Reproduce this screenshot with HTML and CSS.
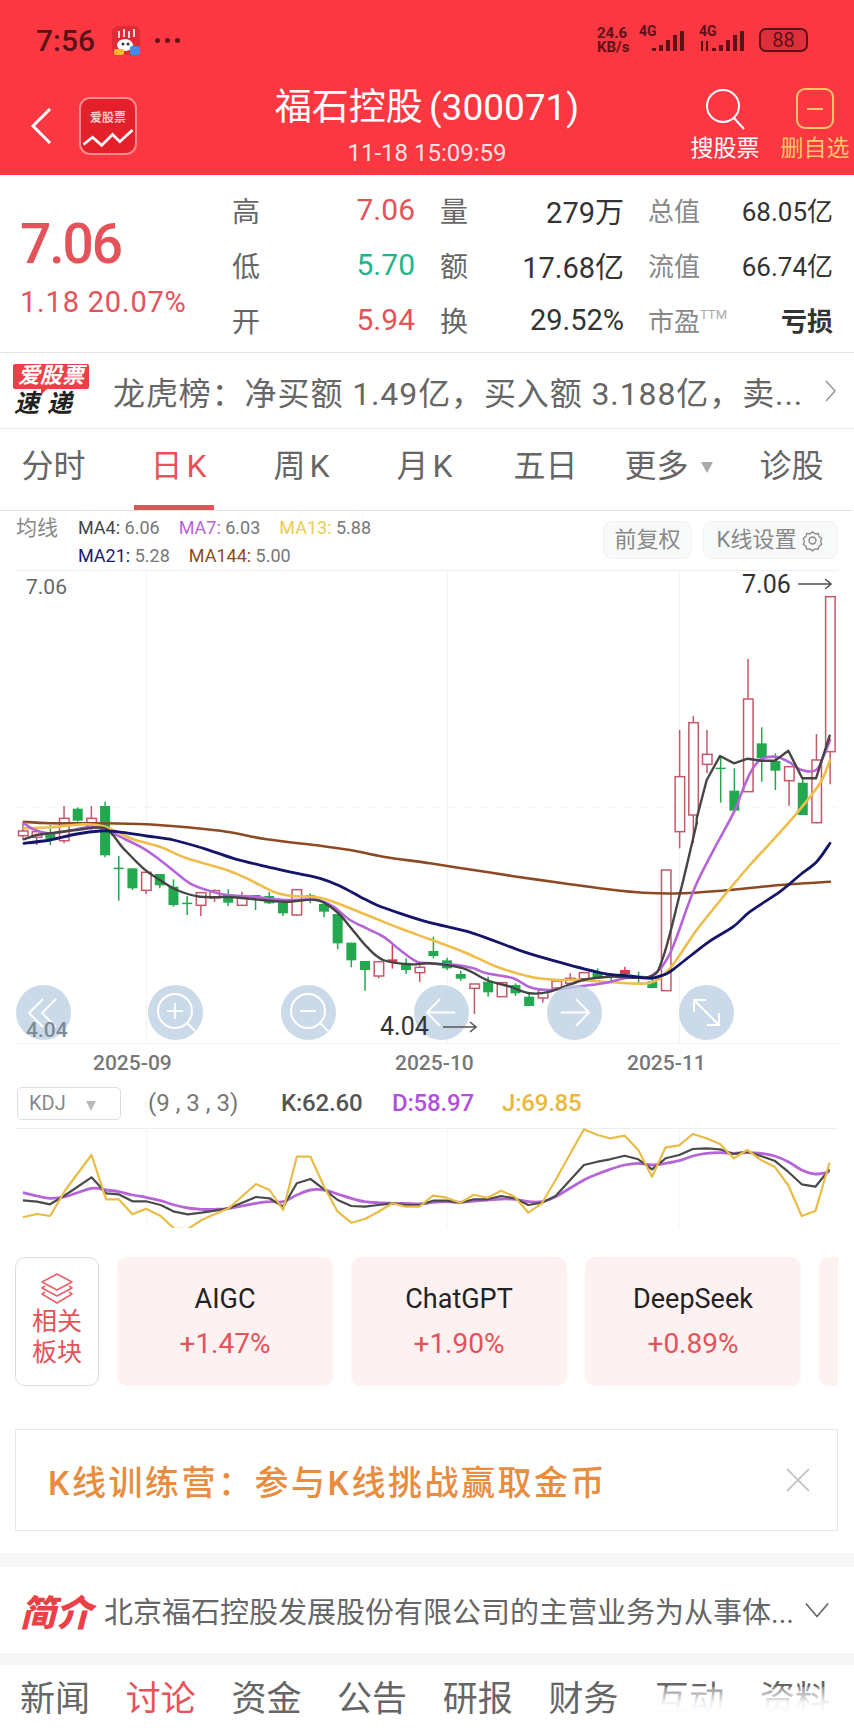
FILE: index.html
```html
<!DOCTYPE html>
<html lang="zh-CN">
<head>
<meta charset="utf-8">
<title>福石控股(300071)</title>
<link rel="stylesheet" href="styles.css">
</head>
<body>
<div class="phone">
  <header class="hero">
    <div class="status">
      <span class="clock">7:56</span>
      <svg class="notif" viewBox="0 0 28 29"><rect width="28" height="29" rx="6" fill="#e02a35"/><path d="M7 5v7M12 3v8M17 5v7M22 3v8" stroke="#ffd9d9" stroke-width="2"/><ellipse cx="13" cy="19" rx="8" ry="6" fill="#fff"/><rect x="2" y="23" width="10" height="6" rx="2" fill="#f5b82e"/><rect x="18" y="20" width="10" height="9" rx="2" fill="#3b8fe8"/><circle cx="11" cy="18" r="1.500" fill="#333"/><circle cx="16" cy="18" r="1.500" fill="#333"/></svg>
      <span class="dots"><i></i><i></i><i></i></span>
      <span class="status-right">
        <span class="speed"><span class="speed-line">24.6</span><span class="speed-line">KB/s</span></span>
        <span class="sig">
          <span class="g4">4G</span>
          <svg class="signal" viewBox="0 0 46 28"><rect x="13" y="22" width="4" height="3"/><rect x="20" y="19" width="4" height="6"/><rect x="27" y="14" width="4" height="11"/><rect x="34" y="9" width="4" height="16"/><rect x="41" y="5" width="4" height="20"/></svg>
        </span>
        <span class="sig two">
          <span class="g4">4G</span>
          <svg class="signal" viewBox="0 0 46 28"><path d="M3 15v10M8 15v10" stroke="#5e1218" stroke-width="2"/><rect x="13" y="22" width="4" height="3"/><rect x="20" y="19" width="4" height="6"/><rect x="27" y="14" width="4" height="11"/><rect x="34" y="9" width="4" height="16"/><rect x="41" y="5" width="4" height="20"/></svg>
        </span>
        <span class="battery">88</span>
      </span>
    </div>
    <nav class="nav">
      <div class="nav-left">
        <svg class="back" viewBox="0 0 22 38"><path d="M20 2 3 19l17 17" fill="none" stroke="#fff" stroke-width="3"/></svg>
        <span class="app-icon">
          <span class="app-name">爱股票</span>
          <svg class="app-line" viewBox="0 0 56 22"><path d="M1 17 11 9l10 9L33 6l8 8L55 1" fill="none" stroke="#fff" stroke-width="3"/></svg>
        </span>
      </div>
      <div class="title-block">
        <div class="title">福石控股 (300071)</div>
        <div class="subtitle">11-18 15:09:59</div>
      </div>
      <div class="nav-actions">
        <div class="action">
          <svg class="action-icon" viewBox="0 0 42 42"><circle cx="19" cy="18" r="16" fill="none" stroke="#fff" stroke-width="2"/><path d="m30 30 10 11" stroke="#fff" stroke-width="2"/></svg>
          <span>搜股票</span>
        </div>
        <div class="action gold">
          <span class="minus-box"><i></i></span>
          <span>删自选</span>
        </div>
      </div>
    </nav>
  </header>

  <section class="quote">
    <div class="price-cell">
      <div class="price">7.06</div>
      <div class="change">1.18 20.07%</div>
    </div>
    <span class="q-label">高</span><span class="q-val up">7.06</span><span class="q-label q2">量</span><span class="q-num">279万</span><span class="q-sub">总值</span><span class="q-small">68.05亿</span>
    <span class="q-label">低</span><span class="q-val down">5.70</span><span class="q-label q2">额</span><span class="q-num">17.68亿</span><span class="q-sub">流值</span><span class="q-small">66.74亿</span>
    <span class="q-label">开</span><span class="q-val up">5.94</span><span class="q-label q2">换</span><span class="q-num">29.52%</span><span class="q-sub">市盈<sup class="ttm">TTM</sup></span><span class="q-small strong">亏损</span>
  </section>

  <section class="news">
    <div class="news-logo">
      <span class="news-tag">爱股票</span>
      <span class="news-sub">速递</span>
    </div>
    <div class="news-text">龙虎榜：净买额 1.49亿，买入额 3.188亿，卖...</div>
    <svg class="news-arrow" viewBox="0 0 12 22"><path d="m1 1 9 10-9 10" fill="none" stroke="#999" stroke-width="1.600"/></svg>
  </section>

  <div class="tabs">
    <span class="tab">分时</span>
    <span class="tab active wide">日K</span>
    <span class="tab wide">周K</span>
    <span class="tab wide">月K</span>
    <span class="tab">五日</span>
    <span class="tab">更多<i class="tab-caret"></i></span>
    <span class="tab">诊股</span>
  </div>

  <div class="ma-head">
    <span class="ma-title">均线</span>
    <div class="ma-legend">
      <div class="ma-row">
        <span class="ma-item"><b class="c-ma4">MA4:</b> 6.06</span>
        <span class="ma-item"><b class="c-ma7">MA7:</b> 6.03</span>
        <span class="ma-item"><b class="c-ma13">MA13:</b> 5.88</span>
      </div>
      <div class="ma-row">
        <span class="ma-item"><b class="c-ma21">MA21:</b> 5.28</span>
        <span class="ma-item"><b class="c-ma144">MA144:</b> 5.00</span>
      </div>
    </div>
    <div class="ma-buttons">
      <span class="chip c-a">前复权</span>
      <span class="chip c-b">K线设置
        <svg class="gear" viewBox="0 0 24 24"><path d="M12 2l3 2.200 3.700-.3 1 3.600 3 2.200-1.300 3.300 1.300 3.300-3 2.200-1 3.600-3.700-.3-3 2.200-3-2.200-3.700.3-1-3.600-3-2.200 1.300-3.300L1.300 9.700l3-2.200 1-3.600 3.700.3z" transform="translate(1.200 1.200) scale(.9)" fill="none" stroke="#888" stroke-width="1.500"/><circle cx="12" cy="12" r="3.600" fill="none" stroke="#888" stroke-width="1.500"/></svg>
      </span>
    </div>
  </div>

  <div class="chart">
    <svg id="kline" class="chart-svg" viewBox="0 570 854 474"></svg>
    <span class="axis-top">7.06</span>
    <svg class="circle-btn b1" viewBox="0 0 55 55"><circle cx="27.500" cy="27.500" r="27.500"/><path d="M27 14 13 28l14 14M40 14 26 28l14 14"/></svg>
    <svg class="circle-btn b2" viewBox="0 0 55 55"><circle cx="27.500" cy="27.500" r="27.500"/><circle class="ln" cx="27" cy="26" r="17"/><path d="M27 18v16M19 26h16M39 38l8 8"/></svg>
    <svg class="circle-btn b3" viewBox="0 0 55 55"><circle cx="27.500" cy="27.500" r="27.500"/><circle class="ln" cx="27" cy="26" r="17"/><path d="M19 26h16M39 38l8 8"/></svg>
    <svg class="circle-btn b4" viewBox="0 0 55 55"><circle cx="27.500" cy="27.500" r="27.500"/><path d="M14 27.500h27M26 14 13 27.500 26 41"/></svg>
    <svg class="circle-btn b5" viewBox="0 0 55 55"><circle cx="27.500" cy="27.500" r="27.500"/><path d="M14 27.500h27M29 14l13 13.500L29 41"/></svg>
    <svg class="circle-btn b6" viewBox="0 0 55 55"><circle cx="27.500" cy="27.500" r="27.500"/><path d="M15 15l25 25M15 27V15h12M40 28v12H28"/></svg>
    <span class="axis-bottom">4.04</span>
    <span class="mark mark-high">7.06</span>
    <svg class="mark-arrow arrow-high" viewBox="0 0 34 12"><path d="M0 6h33M27 1l6 5-6 5" fill="none" stroke="#555" stroke-width="1.500"/></svg>
    <span class="mark mark-low">4.04</span>
    <svg class="mark-arrow arrow-low" viewBox="0 0 34 12"><path d="M0 6h33M27 1l6 5-6 5" fill="none" stroke="#555" stroke-width="1.500"/></svg>
  </div>

  <div class="dates">
    <span class="date d1">2025-09</span>
    <span class="date d2">2025-10</span>
    <span class="date d3">2025-11</span>
  </div>

  <div class="kdj-head">
    <span class="kdj-select">KDJ<i class="tab-caret small"></i></span>
    <span class="kdj-param">(9 , 3 , 3)</span>
    <span class="kdj-v k">K:62.60</span>
    <span class="kdj-v d">D:58.97</span>
    <span class="kdj-v j">J:69.85</span>
  </div>
  <svg id="kdj" class="kdj-svg" viewBox="0 1128 854 100"></svg>

  <section class="related">
    <div class="rel-head">
      <svg class="rel-icon" viewBox="0 0 34 32"><g fill="none" stroke="#e8646a" stroke-width="1.600" stroke-linejoin="round"><path d="M17 1 32 9 17 17 2 9z"/><path d="M5 13 2 15l15 8 15-8-3-2"/><path d="M5 19 2 21l15 9 15-9-3-2"/></g></svg>
      <span>相关</span><span>板块</span>
    </div>
    <div class="rel-card"><span class="rel-name">AIGC</span><span class="rel-pct">+1.47%</span></div>
    <div class="rel-card"><span class="rel-name">ChatGPT</span><span class="rel-pct">+1.90%</span></div>
    <div class="rel-card"><span class="rel-name">DeepSeek</span><span class="rel-pct">+0.89%</span></div>
    <div class="rel-card"></div>
  </section>

  <section class="banner">
    <span class="banner-text">K线训练营：参与K线挑战赢取金币</span>
    <svg class="banner-x" viewBox="0 0 24 24"><path d="m1 1 22 22M23 1 1 23" stroke="#c8c8c8" stroke-width="1.800"/></svg>
  </section>

  <div class="strip first"></div>
  <section class="intro">
    <span class="intro-tag">简介</span>
    <span class="intro-text">北京福石控股发展股份有限公司的主营业务为从事体...</span>
    <svg class="intro-arrow" viewBox="0 0 26 16"><path d="m1 1 12 14L25 1" fill="none" stroke="#666" stroke-width="1.800"/></svg>
  </section>
  <div class="strip"></div>

  <div class="bottom-tabs">
    <span>新闻</span><span class="on">讨论</span><span>资金</span><span>公告</span><span>研报</span><span>财务</span><span>互动</span><span>资料</span>
  </div>
  <div class="veil"></div>
</div>
<script src="chart.js"></script>
</body>
</html>
```
FILE: styles.css
```css
* { box-sizing: border-box; }
html, body { margin: 0; padding: 0; background: #fff; }
body { font-family: Roboto, "Noto Sans CJK SC", sans-serif; color: #333; }
i { font-style: normal; }

.phone { position: relative; width: 854px; height: 1731px; overflow: hidden; background: #fff; }

/* header */
.hero { height: 175px; background: #fb3842; color: #fff; }
.status { height: 80px; padding-left: 36px; display: flex; align-items: center; color: #5e1218; }
.clock { font-size: 30px; font-weight: 500; width: 76px; }
.notif { width: 28px; height: 29px; }
.dots { display: flex; gap: 5px; margin-left: 15px; }
.dots i { width: 5px; height: 5px; border-radius: 50%; background: #6a1218; }
.status-right { margin-left: auto; display: flex; align-items: center; padding-right: 46px; }
.speed { width: 42px; display: flex; flex-direction: column; font-size: 15px; font-weight: 700; line-height: 14px; }
.speed-line { display: block; height: 14px; }
.sig { position: relative; width: 46px; height: 28px; display: block; }
.sig.two { margin-left: 14px; }
.signal { display: block; width: 46px; height: 28px; fill: #5e1218; }
.g4 { position: absolute; left: 0; top: -3px; font-size: 14px; font-weight: 700; line-height: 16px; color: #5e1218; }
.battery { width: 49px; height: 24px; margin-left: 14px; border: 2px solid #5e1218; border-radius: 7px; font-size: 20px; line-height: 20px; text-align: center; color: #5e1218; background: rgba(94, 18, 24, .18); }

.nav { height: 95px; display: grid; grid-template-columns: 1fr auto 1fr; align-items: start; }
.nav-left { display: flex; align-items: center; padding: 17px 0 0 30px; gap: 27px; }
.back { width: 22px; height: 38px; }
.app-icon { width: 58px; height: 58px; border-radius: 11px; background: #e4202a; border: 2px solid #fb8a8e; display: flex; flex-direction: column; align-items: center; padding-top: 12px; }
.app-name { font-size: 12px; font-weight: 700; color: #ffc9c9; line-height: 14px; }
.app-line { width: 54px; height: 20px; margin-top: 4px; }
.title-block { text-align: center; padding-top: 5px; }
.title { font-size: 37px; line-height: 46px; word-spacing: -3px; }
.subtitle { font-size: 24px; line-height: 30px; margin-top: 7px; color: #fde2e3; }
.nav-actions { display: flex; justify-content: flex-end; padding: 8px 4px 0 0; gap: 20px; }
.action { width: 70px; display: flex; flex-direction: column; align-items: center; font-size: 23px; line-height: 28px; white-space: nowrap; }
.action-icon { width: 42px; height: 42px; margin-bottom: 5px; }
.gold { color: #ffc76b; }
.minus-box { width: 38px; height: 41px; margin-bottom: 6px; border: 2px solid #ffc76b; border-radius: 9px; display: flex; align-items: center; justify-content: center; }
.minus-box i { width: 16px; height: 2px; background: #ffc76b; }

/* quote */
.quote { height: 178px; padding-top: 7px; border-bottom: 1px solid #e4e4e4; display: grid; grid-template-columns: 232px 28px 155px 53px 156px 106px 103px; grid-auto-rows: 55px; align-items: center; }
.price-cell { grid-row: 1 / 4; padding-left: 20px; align-self: start; }
.price { font-size: 55px; font-weight: 500; line-height: 60px; margin-top: 32px; color: #e4525a; letter-spacing: -2px; }
.change { font-size: 29px; line-height: 34px; margin-top: 11px; color: #e4525a; letter-spacing: .8px; white-space: nowrap; }
.q-label { font-size: 28px; color: #666; }
.q2 { padding-left: 25px; }
.q-val { font-size: 30px; text-align: right; }
.up { color: #e4525a; }
.down { color: #1fb58c; }
.q-num { font-size: 29px; text-align: right; color: #333; }
.q-sub { font-size: 26px; color: #888; padding-left: 24px; position: relative; }
.ttm { font-size: 13px; color: #aaa; vertical-align: 12px; line-height: 0; }
.q-small { font-size: 26px; text-align: right; color: #333; }
.q-small.strong { font-weight: 700; }

/* news */
.news { height: 76px; display: flex; align-items: center; padding-left: 13px; border-bottom: 1px solid #e8e8e8; }
.news-logo { width: 76px; display: flex; flex-direction: column; align-items: flex-start; }
.news-tag { position: relative; display: block; width: 76px; height: 25px; background: #ec4048; color: #fff; border-radius: 2px; font-size: 22px; line-height: 24px; font-weight: 700; font-style: italic; text-align: center; }
.news-tag::after { content: ""; position: absolute; left: 28px; top: 25px; border-style: solid; border-width: 6px 6px 0 0; border-color: #ec4048 transparent transparent transparent; }
.news-sub { font-size: 25px; line-height: 28px; font-weight: 700; font-style: italic; color: #222; margin: 1px 0 0 1px; letter-spacing: 8px; }
.news-text { margin-left: 24px; font-size: 32px; letter-spacing: .9px; color: #666; white-space: nowrap; width: 695px; overflow: hidden; }
.news-arrow { width: 12px; height: 22px; margin-left: 17px; }

/* tabs */
.tabs { height: 82px; width: 861px; margin-left: -8px; display: grid; grid-template-columns: repeat(7, 123px); align-items: start; border-bottom: 1px solid #e2e2e2; }
.tab { position: relative; height: 81px; line-height: 74px; font-size: 32px; color: #666; text-align: center; white-space: nowrap; }
.tab.wide { letter-spacing: 4px; padding-left: 8px; }
.tab.active { color: #e4525a; }
.tab.active::after { content: ""; position: absolute; left: 19px; right: 24px; bottom: 0; height: 5px; background: #e4525a; }
.tab-caret { display: inline-block; margin-left: 12px; vertical-align: 4px; border-style: solid; border-width: 11px 6.500px 0; border-color: #aaa transparent transparent; }
.tab-caret.small { border-width: 10px 5.500px 0; margin-left: 20px; vertical-align: -1px; border-color: #bbb transparent transparent; }

/* MA */
.ma-head { height: 59px; display: flex; padding: 4px 16px 0; position: relative; }
.ma-title { font-size: 21px; line-height: 26px; color: #888; width: 62px; }
.ma-legend { display: flex; flex-direction: column; gap: 3px; font-size: 18px; color: #777; }
.ma-row { display: flex; gap: 19px; line-height: 25px; }
.ma-item b { font-weight: 400; }
.c-ma4 { color: #444; }
.c-ma7 { color: #b565d8; }
.c-ma13 { color: #eccb55; }
.c-ma21 { color: #1a1a6e; }
.c-ma144 { color: #8a4a1c; }
.ma-buttons { margin-left: auto; display: flex; gap: 11px; padding-top: 6px; }
.chip { height: 38px; border-radius: 9px; background: #f8f9f9; border: 1px solid #f1f2f2; font-size: 22px; line-height: 36px; color: #888; display: flex; align-items: center; justify-content: center; gap: 5px; white-space: nowrap; }
.c-a { width: 89px; }
.c-b { width: 135px; }
.gear { width: 23px; height: 23px; }

/* chart */
.chart { position: relative; height: 474px; }
.chart-svg { display: block; width: 854px; height: 474px; }
.axis-top, .axis-bottom { position: absolute; left: 26px; font-size: 21px; line-height: 24px; color: #666; }
.axis-top { top: 5px; }
.axis-bottom { top: 448px; color: #7d8b97; font-weight: 500; }
.mark { position: absolute; font-size: 25px; line-height: 30px; color: #333; }
.mark-high { left: 742px; top: 0; }
.mark-low { left: 380px; top: 442px; }
.mark-arrow { position: absolute; width: 34px; height: 12px; }
.arrow-high { left: 798px; top: 8px; }
.arrow-low { left: 443px; top: 451px; }
.circle-btn { position: absolute; width: 55px; height: 55px; top: 414.500px; }
.circle-btn circle { fill: #bdd0e3; fill-opacity: .78; stroke: none; }
.circle-btn path { fill: none; stroke: #fff; stroke-width: 2; }
.circle-btn circle.ln { fill: none; stroke: #fff; stroke-width: 2; }
.b1 { left: 15.500px; }
.b2 { left: 147.500px; }
.b3 { left: 280.500px; }
.b4 { left: 413.500px; }
.b5 { left: 546.500px; }
.b6 { left: 678.500px; }

.dates { position: relative; height: 43px; }
.date { position: absolute; top: 6px; font-size: 21px; line-height: 26px; color: #777; font-weight: 500; }
.d1 { left: 93px; }
.d2 { left: 395px; }
.d3 { left: 627px; }

.kdj-head { height: 41px; display: flex; align-items: flex-start; padding-left: 17px; font-size: 24px; line-height: 33px; }
.kdj-select { width: 104px; height: 33px; border: 1px solid #ddd; border-radius: 5px; padding-left: 11px; font-size: 20px; line-height: 31px; color: #888; }
.kdj-param { color: #777; margin-left: 27px; width: 133px; white-space: nowrap; }
.kdj-v { font-weight: 500; letter-spacing: -.2px; }
.kdj-v.k { color: #555; width: 111px; }
.kdj-v.d { color: #b050e0; width: 110px; }
.kdj-v.j { color: #e8b93a; }
.kdj-svg { display: block; width: 854px; height: 100px; margin-bottom: 29px; }

/* related */
.related { height: 129px; width: 838px; overflow: hidden; display: flex; gap: 18px; padding-left: 15px; }
.rel-head { flex: none; width: 84px; height: 129px; border: 1px solid #ddd; border-radius: 10px; display: flex; flex-direction: column; align-items: center; color: #e4525a; font-size: 25px; line-height: 31px; padding-top: 15px; }
.rel-icon { width: 34px; height: 32px; margin-bottom: 1px; }
.rel-card { flex: none; width: 216px; height: 129px; border-radius: 10px; background: #fdf1f1; display: flex; flex-direction: column; align-items: center; padding-top: 24px; }
.rel-name { font-size: 27px; line-height: 36px; color: #222; }
.rel-pct { font-size: 28px; line-height: 36px; margin-top: 9px; color: #e4525a; }

/* banner */
.banner { height: 102px; margin: 43px 16px 0 15px; border: 1px solid #e6e6e6; display: flex; align-items: center; justify-content: space-between; padding: 0 27px 0 32px; }
.banner-text { font-size: 34px; letter-spacing: 2.500px; color: #e98c3e; font-weight: 500; white-space: nowrap; }
.banner-x { width: 24px; height: 24px; }

.strip { height: 12px; background: #f6f6f6; }
.strip.first { height: 14px; margin-top: 22px; }
.intro { height: 86px; display: flex; align-items: center; padding-left: 20px; }
.intro-tag { width: 84px; font-size: 36px; font-weight: 900; font-style: italic; color: #ec4048; white-space: nowrap; }
.intro-text { font-size: 29px; color: #666; white-space: nowrap; width: 701px; }
.intro-arrow { width: 24px; height: 16px; }

.bottom-tabs { height: 66px; display: flex; justify-content: space-between; padding: 12px 24px 0 20px; font-size: 35px; line-height: 46px; color: #666; }
.bottom-tabs .on { color: #e4525a; }
.veil { position: absolute; left: 638px; top: 1687px; width: 216px; height: 44px; background: linear-gradient(180deg, rgba(255,255,255,.3), rgba(255,255,255,.9) 35%, #fff 60%); }
```
FILE: chart.js
```js
(function () {
  var NS = 'http://www.w3.org/2000/svg';
  function el(parent, name, attrs) {
    var n = document.createElementNS(NS, name);
    for (var k in attrs) n.setAttribute(k, attrs[k]);
    parent.appendChild(n);
    return n;
  }
  function yz(z) { return 780 + z / 3; }
  function z4(a) { var o = []; for (var i = 0; i < a.length; i += 2) o.push([a[i] / 3, 780 + a[i + 1] / 3]); return o; }
  function z5(a) { var o = []; for (var i = 0; i < a.length; i += 2) o.push([430 + a[i] / 3, 780 + a[i + 1] / 3]); return o; }
  function z6(a) { var o = []; for (var i = 0; i < a.length; i += 2) o.push([430 + a[i] / 3, 560 + a[i + 1] / 3]); return o; }

  function smooth(p) {
    var d = 'M' + p[0][0].toFixed(1) + ' ' + p[0][1].toFixed(1);
    for (var i = 0; i < p.length - 1; i++) {
      var a = p[i - 1] || p[i], b = p[i], c = p[i + 1], e = p[i + 2] || c;
      d += 'C' + (b[0] + (c[0] - a[0]) / 6).toFixed(1) + ' ' + (b[1] + (c[1] - a[1]) / 6).toFixed(1) + ' ' +
        (c[0] - (e[0] - b[0]) / 6).toFixed(1) + ' ' + (c[1] - (e[1] - b[1]) / 6).toFixed(1) + ' ' +
        c[0].toFixed(1) + ' ' + c[1].toFixed(1);
    }
    return d;
  }
  function poly(p) {
    return 'M' + p.map(function (q) { return q[0].toFixed(1) + ' ' + q[1].toFixed(1); }).join('L');
  }

  var RED = '#c4586a', GREEN = '#22a94f', SOLID = '#d23f4c';
  // zoomed y of the upper crop, expressed in the lower crop's units
  function z6y(z) { return z - 660; }
  var raw = [
    ['r',125,153,167,180],['r',145,155,172,195],['g',135,162,178,195],['r',78,115,182,190],['g',82,86,122,125],
    ['r',78,115,145,150],['g',65,78,226,232],['g',228,263,266,362],['g',265,265,325,330],['r',275,277,331,342],
    ['g',282,282,316,325],['g',298,320,375,380],['g',348,368,371,405],['r',338,338,376,408],['r',328,332,354,366],
    ['g',328,342,368,378],['r',335,353,376,378],['g',345,345,349,390],['g',336,348,370,372],['g',360,368,400,408],
    ['r',329,329,405,407],['g',340,346,354,370],['g',368,372,395,412],['g',400,402,490,508],['g',488,488,541,562],
    ['g',543,543,570,632],['r',545,545,588,595],['s',495,538,546,566],['g',535,552,570,582],['r',555,562,578,606],
    ['g',470,513,528,535],['g',533,541,565,570],['g',572,582,596,602],['r',612,612,625,702],['g',590,605,637,650],
    ['r',608,608,650,650],['g',610,615,640,648],['g',640,650,678,678],['r',630,630,654,668],['r',603,603,624,624],
    ['r',580,595,610,622],['r',575,578,596,605],['g',565,578,596,596],['g',580,585,590,605],['s',560,570,582,585],
    ['g',575,587,590,610],['g',590,604,624,624],['r',270,270,632,632],
    ['r',z6y(510),z6y(650),155,205],['r',z6y(468),z6y(488),105,190],['r',z6y(510),z6y(583),z6y(613),z6y(640)],
    ['g',z6y(590),z6y(623),z6y(626),z6y(728)],['g',z6y(625),z6y(692),z6y(752),z6y(755)],['r',z6y(297),z6y(417),z6y(695),z6y(695)],
    ['g',z6y(502),z6y(550),z6y(595),z6y(665)],['g',z6y(580),z6y(603),z6y(632),z6y(690)],['r',z6y(620),z6y(620),z6y(662),z6y(737)],
    ['g',z6y(655),z6y(668),z6y(765),z6y(765)],['r',z6y(522),z6y(600),128,130],['r',z6y(110),z6y(110),z6y(575),z6y(673)]
  ];

  var svg = document.getElementById('kline');
  el(svg, 'path', { d: 'M16 570.5H838', stroke: '#eee', 'stroke-width': 1 });
  el(svg, 'path', { d: 'M146.500 570V1044M447.500 570V1044M679.500 570V1044', stroke: '#f3f3f3', 'stroke-width': 1 });
  el(svg, 'path', { d: 'M16 807H838', stroke: '#f0f0f0', 'stroke-width': 1, 'stroke-dasharray': '8 8' });
  el(svg, 'path', { d: 'M16 1044H840', stroke: '#e4e4e4', 'stroke-width': 1 });

  raw.forEach(function (c, i) {
    var x = 23 + 13.68 * i, h = yz(c[1]), t = yz(c[2]), b = yz(c[3]), l = yz(c[4]);
    var col = c[0] === 'g' ? GREEN : c[0] === 's' ? SOLID : RED;
    el(svg, 'path', { d: 'M' + x + ' ' + h + 'V' + l, stroke: col, 'stroke-width': 1.5 });
    if (c[0] !== 'r') {
      el(svg, 'rect', { x: x - 5, y: t, width: 10, height: Math.max(b - t, 1.5), fill: col });
    } else {
      el(svg, 'rect', { x: x - 4.5, y: t, width: 9.5, height: Math.max(b - t, 1.5), fill: '#fff', stroke: col, 'stroke-width': 1.5 });
    }
  });

  var lines = [
    ['#8b4a22', 2.6, z4([72,125,150,130,315,130,440,133,560,142,680,155,800,178,950,196,1050,210,1150,230,1290,250])
      .concat(z5([130,270,260,290,400,310,520,326,640,338,750,340,900,330,1050,315,1200,305]))],
    ['#eebd4a', 2.6, z4([72,145,150,142,250,133,315,140,400,178,480,200,560,235,680,270,750,300,820,335,870,347,950,352,1000,365,1100,405,1200,445,1290,478])
      .concat(z5([100,515,200,560,300,590,380,600,450,600,550,607,660,608,720,565,800,450,880,350,960,255,1020,190,1100,100,1170,10]))
      .concat(z6([1200,600]))],
    ['#b565d8', 2.6, z4([72,130,100,148,150,160,220,150,270,140,315,148,360,170,430,205,480,240,530,280,570,310,620,330,680,345,760,350,850,360,950,360,1000,380,1050,420,1100,445,1150,470,1200,510,1250,545,1290,550])
      .concat(z5([80,555,130,565,170,580,250,595,300,622,360,630,440,620,520,610,600,592,660,590,720,520,800,310,910,100]))
      .concat(z6([930,710,960,640,990,600,1035,590,1075,605,1115,630,1158,630,1180,590,1200,540]))],
    ['#454545', 2.4, z4([72,178,110,165,150,160,230,150,315,145,370,205,430,265,480,300,530,330,600,350,700,352,850,365,950,360,1010,395,1050,440,1100,500,1150,540,1230,553,1290,550])
      .concat(z5([100,565,170,600,240,620,300,640,360,635,460,600,540,590,660,590,700,530,750,340,800,130]))],
    ['#14146a', 2.8, z4([72,190,150,180,230,162,300,153,350,155,440,168,520,180,610,205,700,235,800,260,880,278,960,295,1020,318,1080,350,1130,375,1200,400,1290,428])
      .concat(z5([130,460,280,515,400,550,520,580,600,588,660,595,700,585,730,568,830,490,910,440,960,395,1050,335,1110,285,1160,245,1200,190]))]
  ];
  lines.forEach(function (l) {
    el(svg, 'path', { d: smooth(l[2]), fill: 'none', stroke: l[0], 'stroke-width': l[1], 'stroke-linejoin': 'round', 'stroke-linecap': 'round' });
  });
  // the tail of MA4 is angular, so it stays a polyline over the smoothed part
  el(svg, 'path', {
    d: poly(z5([800,130]).concat(z6([800,775,830,660,870,588,912,610,953,596,994,602,1035,602,1075,572,1117,655,1158,655,1199,527]))),
    fill: 'none', stroke: '#454545', 'stroke-width': 2.4, 'stroke-linejoin': 'round', 'stroke-linecap': 'round'
  });

  var kx = [42,68,92,120,168,195,218,243,268,295,320,345,370,395,420,470,495,520,545,570,595,620,645,670,695,720,745,770,795,820,845,870,895,920,945,970,995,1020,1072,1097,1120,1147,1172,1197,1222,1247,1272,1297,1322,1347,1372,1397,1422,1447,1472,1497,1523];
  var J = [442,432,438,360,255,388,388,433,416,438,476,477,450,432,415,342,360,420,260,260,350,425,458,447,425,400,410,410,377,383,398,374,383,362,380,428,400,330,178,195,205,197,240,320,232,226,192,205,222,265,240,270,290,345,438,423,278];
  var K = [391,395,403,375,322,370,373,394,394,405,425,433,428,422,415,381,385,410,340,327,358,390,408,410,405,400,405,405,392,392,398,388,388,378,385,405,398,378,285,275,268,257,268,298,265,255,237,235,238,252,245,258,272,305,343,350,298];
  var D = [368,378,385,380,355,360,365,375,382,392,405,414,418,418,415,400,395,395,375,360,360,372,385,395,398,400,400,402,397,395,397,393,390,387,388,395,395,380,330,312,298,285,280,285,280,272,258,250,248,250,248,250,258,275,300,312,305];
  function pts(v) { return v.map(function (y, i) { return [kx[i] / 1.836, 1070 + y / 3]; }); }

  var kdj = document.getElementById('kdj');
  el(kdj, 'path', { d: 'M16 1128.500H838', stroke: '#eee', 'stroke-width': 1 });
  el(kdj, 'path', { d: 'M146.500 1128V1228M447.500 1128V1228M679.500 1128V1228', stroke: '#f5f5f5', 'stroke-width': 1 });
  el(kdj, 'path', { d: smooth(pts(D)), fill: 'none', stroke: '#b565d8', 'stroke-width': 2.8, 'stroke-linejoin': 'round' });
  el(kdj, 'path', { d: poly(pts(K)), fill: 'none', stroke: '#4a4a4a', 'stroke-width': 2.2, 'stroke-linejoin': 'round' });
  el(kdj, 'path', { d: poly(pts(J)), fill: 'none', stroke: '#e8bc45', 'stroke-width': 2.2, 'stroke-linejoin': 'round' });
})();
```
